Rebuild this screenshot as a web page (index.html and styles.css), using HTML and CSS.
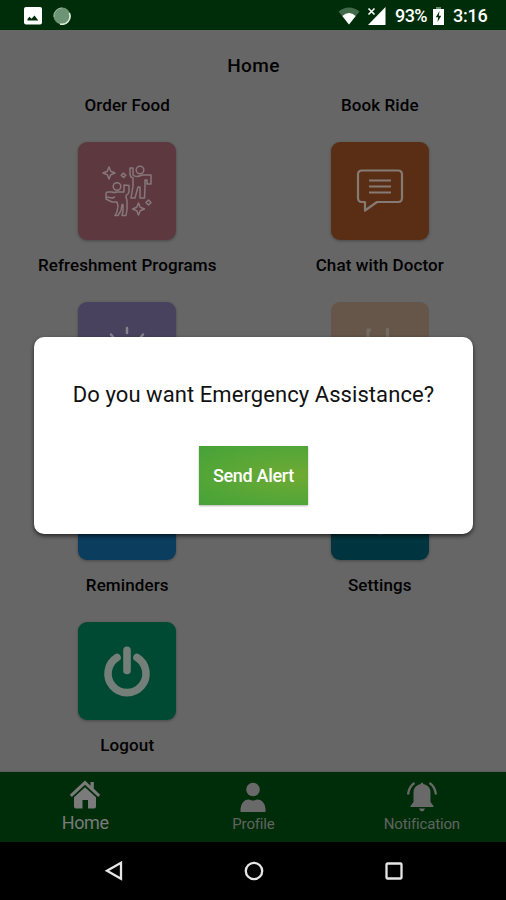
FILE: index.html
```html
<!DOCTYPE html>
<html lang="en">
<head>
<meta charset="utf-8">
<title>Home</title>
<link rel="stylesheet" href="styles.css">
</head>
<body>
<div class="phone">
  <header class="status">
    <div class="status-left">
      <svg width="18" height="18" viewBox="0 0 18 18"><rect width="18" height="17.500" rx="2" fill="#fff"/><path d="M3.500 13.500V12l2-2.300 2 2 3-3.200 3.800 5z" fill="#002d09"/></svg>
      <svg width="18" height="18" viewBox="0 0 18 18"><circle cx="9" cy="9" r="8.500" fill="#6d9475"/><path d="M16.300 6A8 8 0 0 1 7 17" fill="none" stroke="#dcebdc" stroke-width="1.600"/><path d="M1 10A8 8 0 0 1 9 1" fill="none" stroke="#9ab79c"/></svg>
    </div>
    <div class="status-right">
      <svg class="wifi" width="22" height="18" viewBox="0 0 22 18"><path d="M0.500 4.500Q11-3.500 21.500 4.500L11 17.500z" fill="#41694a"/><path d="M4.300 9Q11 3.200 17.700 9L11 17.500z" fill="#fff"/></svg>
      <svg class="signal" width="19" height="18" viewBox="0 0 19 18"><path d="M18.500 0V18H1z" fill="#fff"/><path d="M0 0H9V8.500H0z" fill="#002d09"/><path d="M1.500 1.500l6 6m0-6l-6 6" stroke="#fff" stroke-width="1.600"/></svg>
      <span class="percent">93%</span>
      <svg class="battery" width="11" height="18" viewBox="0 0 11 18"><path d="M3 0h5v2h3v16H0V2h3z" fill="#fff"/><path d="M3 0h5v2H3z" fill="#6d8b72"/><path d="M6.500 4L2.800 10.300h2.400L4.500 15 8.300 8.700H5.800z" fill="#002d09"/></svg>
      <span class="clock">3:16</span>
    </div>
  </header>

  <main class="content">
    <h1 class="title">Home</h1>
    <div class="grid">
      <div class="label">Order Food</div>
      <div class="label">Book Ride</div>

      <div class="item">
        <div class="tile pink">
          <svg width="98" height="98" viewBox="0 0 98 98" fill="none" stroke="#87777a" stroke-width="1.500" stroke-linejoin="round" stroke-linecap="round">
            <path d="M31 25l1.700 4.300L37 31l-4.300 1.700L31 37l-1.700-4.300L25 31l4.300-1.700z"/>
            <path d="M60.500 61l1.700 4.300 4.300 1.700-4.300 1.700-1.700 4.300-1.700-4.300-4.300-1.700 4.300-1.700z"/>
            <path d="M45.500 31l2.300 2.200-2.300 2.200-2.300-2.200zM70.500 58l2.500 2.500-2.500 2.500-2.500-2.500z"/>
            <circle cx="62" cy="28" r="3.800"/>
            <path d="M52 26v6q0 3 3 4v8l-2 12h4l3-11h2v11h4.500l.5-12v-6h2v4h4v-9h-9q-6 3-9 0v-7z"/>
            <circle cx="39" cy="44.500" r="3.800"/>
            <path d="M46 43v7h-7q-3 1-5 0h-4q-2 0-2 2v5l6 3h5l1 4-1 6-2 3.500h3l3-5 1-6h1v7l-1 4h4l1-6v-9q-1-3-1-5 3-2 3-4v-6z"/>
            <path d="M28.500 55l6 1 2-1"/>
          </svg>
        </div>
        <div class="label">Refreshment Programs</div>
      </div>
      <div class="item">
        <div class="tile orange">
          <svg width="98" height="98" viewBox="0 0 98 98" fill="none" stroke="#867a74" stroke-width="2.200" stroke-linejoin="round">
            <path d="M31 28.500h36q4 0 4 4v23.500q0 4-4 4H46L34 68.500V60h-3q-4 0-4-4V32.500q0-4 4-4z"/>
            <path d="M38 38.500h22M38 44.500h22M38 50.500h22"/>
          </svg>
        </div>
        <div class="label">Chat with Doctor</div>
      </div>

      <div class="item">
        <div class="tile purple">
          <svg width="98" height="98" viewBox="0 0 98 98" fill="none" stroke="#85838d" stroke-width="2.500" stroke-linecap="round"><path d="M49 26v5M33 32.500l4 5M65 32.500l-4 5"/><circle cx="49" cy="49" r="9"/></svg>
        </div>
        <div class="label"></div>
      </div>
      <div class="item">
        <div class="tile beige">
          <svg width="98" height="98" viewBox="0 0 98 98" fill="none" stroke="#736a62" stroke-width="3"><path d="M37 70V28h3M56.500 70V26"/></svg>
        </div>
        <div class="label"></div>
      </div>

      <div class="item">
        <div class="tile blue"></div>
        <div class="label">Reminders</div>
      </div>
      <div class="item">
        <div class="tile teal">
          <svg width="98" height="98" viewBox="0 0 98 98"><path d="M45 66h8v6q-4 1.500-8 0z" fill="#4f686c"/></svg>
        </div>
        <div class="label">Settings</div>
      </div>

      <div class="item">
        <div class="tile green">
          <svg width="98" height="98" viewBox="0 0 98 98" fill="none" stroke="#747f7a" stroke-width="7.600" stroke-linecap="round"><path d="M49 28.300V48.500M39 35.500A19 19 0 1 0 59 35.500"/></svg>
        </div>
        <div class="label">Logout</div>
      </div>
    </div>
  </main>

  <nav class="tabs">
    <div class="tab active">
      <svg width="32" height="30" viewBox="0 0 32 30" fill="#7b7b7b"><path d="M16 0.500l5.500 5.200V2h3.300v6.700l6.400 6-2 2.300L16 4.800 2.800 17 .8 14.700z"/><path d="M16 7.300l11 10v9.200q0 2-2 2h-6V20h-5.500v8.500H7q-2 0-2-2v-9.200z"/></svg>
      <span>Home</span>
    </div>
    <div class="tab">
      <svg width="32" height="30" viewBox="0 0 32 30" fill="#696969"><circle cx="16" cy="7.500" r="6.800"/><path d="M3.500 30v-3Q4.500 17.500 12 17.500q4 2 8 0 7.500 0 8.500 9.500v3z"/></svg>
      <span>Profile</span>
    </div>
    <div class="tab">
      <svg width="32" height="30" viewBox="0 0 32 30" fill="#696969"><path d="M14.500 2q1.500-3 3 0 7 1.500 7 9v9l3 4v1h-23v-1l3-4v-9q0-7.500 7-9z"/><path d="M13 26.500h6q-1 2.800-3 2.800t-3-2.800z"/><path d="M8.500 1Q3 4.500 2 12.500M23.500 1Q29 4.500 30 12.500" fill="none" stroke="#696969" stroke-width="2.300"/></svg>
      <span>Notification</span>
    </div>
  </nav>

  <footer class="system">
    <svg width="20" height="20" viewBox="0 0 20 20"><path d="M17 1.800v16L3 9.800z"/></svg>
    <svg width="20" height="20" viewBox="0 0 20 20"><circle cx="10" cy="10" r="8.200"/></svg>
    <svg width="20" height="20" viewBox="0 0 20 20"><rect x="2.500" y="2.500" width="15" height="15" rx="1"/></svg>
  </footer>

  <div class="dialog">
    <p class="question">Do you want Emergency Assistance?</p>
    <button class="send">Send Alert</button>
  </div>
</div>
</body>
</html>
```

FILE: styles.css
```css
* { box-sizing: border-box; }
body { margin: 0; font-family: Roboto, "Liberation Sans", sans-serif; }
svg { display: block; flex: none; }
.phone { position: relative; width: 506px; height: 900px; display: flex; flex-direction: column; overflow: hidden; background: #666; }

.status { height: 30px; flex: none; background: #002d09; display: flex; justify-content: space-between; align-items: center; padding: 1px 18px 0 24px; color: #fff; font-size: 18px; font-weight: 500; }
.status-left, .status-right { display: flex; align-items: center; }
.status-left { gap: 11px; }
.wifi { margin-right: 7px; }
.signal { margin-right: 9px; }
.percent { width: 32px; margin-right: 6px; letter-spacing: -0.6px; }
.battery { margin-right: 9px; }
.clock { width: 35px; white-space: nowrap; letter-spacing: -0.2px; }

.content { flex: 1; min-height: 0; padding: 24px 0 0 1px; color: #020202; border-bottom: 1px solid #5b605c; }
.title { margin: 0 0 17px; text-align: center; font-size: 19px; line-height: 24px; font-weight: 500; letter-spacing: 0.4px; }
.grid { display: grid; grid-template-columns: 1fr 1fr; row-gap: 27px; }
.label { text-align: center; height: 20px; line-height: 20px; font-size: 17px; font-weight: 500; letter-spacing: 0.1px; white-space: nowrap; }
.item { display: flex; flex-direction: column; align-items: center; gap: 15px; }
.tile { width: 98px; height: 98px; border-radius: 9px; box-shadow: 0 1px 3px rgba(0, 0, 0, 0.3); }
.pink { background: #5d393f; }
.orange { background: #5a2e14; }
.purple { background: #48425f; }
.beige { background: #665549; box-shadow: none; }
.blue { background: #0a3d5e; }
.teal { background: #00343e; }
.green { background: #004a34; }

.tabs { height: 70px; flex: none; background: #002d09; display: grid; grid-template-columns: repeat(3, 1fr); padding-left: 1px; }
.tab { display: flex; flex-direction: column; align-items: center; padding-top: 10px; color: #606460; font-size: 15px; line-height: 20px; letter-spacing: -0.15px; }
.tab span { margin-top: 2px; }
.tab.active { padding-top: 8px; color: #7b7b7b; font-size: 18px; letter-spacing: -0.4px; }
.tab.active span { margin-top: 3px; }

.system { height: 58px; flex: none; background: #000; display: flex; justify-content: center; gap: 120px; padding: 19px 0 0 1px; }
.system svg { fill: none; stroke: #e6e6e6; stroke-width: 2.3; }

.dialog { position: absolute; left: 34px; top: 337px; width: 439px; height: 197px; border-radius: 10px; background: #fff; box-shadow: 0 2px 4px rgba(0, 0, 0, 0.65); display: flex; flex-direction: column; align-items: center; padding-top: 44px; }
.question { margin: 0 0 37px; font-size: 22px; line-height: 28px; color: #111; letter-spacing: 0.07px; white-space: nowrap; }
.send { width: 109px; height: 59px; border: 0; padding: 0; color: #fff; font: 500 18px Roboto, "Liberation Sans", sans-serif; letter-spacing: -0.3px; background: radial-gradient(ellipse at 90% 50%, #70aa34 0%, #55a637 60%, #46a237 100%); box-shadow: 0 1px 2px rgba(0, 0, 0, 0.3); }
```
